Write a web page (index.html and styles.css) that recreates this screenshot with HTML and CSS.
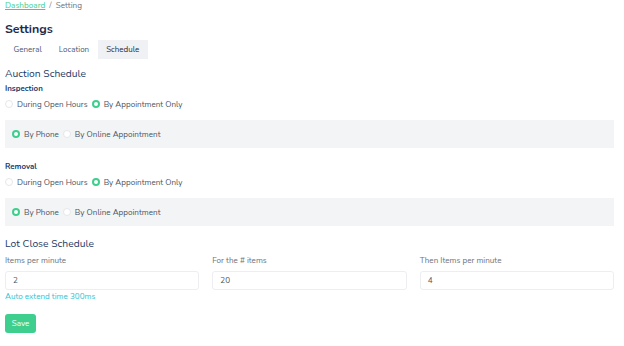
FILE: index.html
```html
<!DOCTYPE html>
<html>
<head>
<meta charset="utf-8">
<link rel="stylesheet" href="styles.css">
</head>
<body>
<div class="page">
  <div class="crumbs"><a class="crumb-link">Dashboard</a><span class="sep">/</span><span>Setting</span></div>
  <h1 class="title">Settings</h1>
  <div class="tabs">
    <span class="tab">General</span>
    <span class="tab">Location</span>
    <span class="tab active">Schedule</span>
  </div>
  <h2 class="section">Auction Schedule</h2>

  <div class="group-label">Inspection</div>
  <div class="radios">
    <label class="radio"><span class="dot"></span>During Open Hours</label>
    <label class="radio"><span class="dot on"></span>By Appointment Only</label>
  </div>
  <div class="subbox">
    <label class="radio"><span class="dot on"></span>By Phone</label>
    <label class="radio"><span class="dot"></span>By Online Appointment</label>
  </div>

  <div class="group-label g2">Removal</div>
  <div class="radios">
    <label class="radio"><span class="dot"></span>During Open Hours</label>
    <label class="radio"><span class="dot on"></span>By Appointment Only</label>
  </div>
  <div class="subbox">
    <label class="radio"><span class="dot on"></span>By Phone</label>
    <label class="radio"><span class="dot"></span>By Online Appointment</label>
  </div>

  <h2 class="section s2">Lot Close Schedule</h2>
  <div class="fields">
    <div class="field">
      <div class="flabel">Items per minute</div>
      <div class="input">2</div>
      <div class="hint">Auto extend time 300ms</div>
    </div>
    <div class="field">
      <div class="flabel">For the # items</div>
      <div class="input">20</div>
    </div>
    <div class="field">
      <div class="flabel">Then Items per minute</div>
      <div class="input">4</div>
    </div>
  </div>
  <button class="save">Save</button>
</div>
</body>
</html>
```
FILE: styles.css
```css
* { box-sizing: border-box; }
body {
  margin: 0;
  background: #fff;
  font-family: "Nunito", "Lato", "Open Sans", sans-serif;
  color: #4b5563;
}
.page {
  padding: 0 10px 0 5px;
  display: flex;
  flex-direction: column;
}
.crumbs {
  font-size: 8.2px;
  line-height: 12px;
  color: #6b7280;
  display: flex;
  gap: 4px;
}
.crumb-link {
  color: #3ecf8e;
  text-decoration: underline;
}
.title {
  margin: 8px 0 0;
  font-size: 12.4px;
  line-height: 18px;
  font-weight: 700;
  color: #1e2b4d;
}
.tabs {
  display: flex;
  margin-top: 2px;
  height: 19px;
}
.tab {
  font-size: 8px;
  line-height: 19px;
  padding: 0 8.5px;
  color: #4b5872;
}
.tab.active {
  background: #eff1f4;
  color: #1f2937;
}
.section {
  margin: 8px 0 0;
  font-size: 10.3px;
  line-height: 15px;
  font-weight: 400;
  color: #243a66;
}
.section.s2 { margin-top: 11px; }
.group-label {
  margin-top: 1px;
  font-size: 7.9px;
  line-height: 12px;
  font-weight: 700;
  color: #223a6b;
}
.group-label.g2 { margin-top: 13px; }
.radios {
  display: flex;
  margin-top: 3px;
  height: 12px;
  align-items: center;
}
.radio {
  display: flex;
  align-items: center;
  font-size: 8.1px;
  color: #4b5563;
  margin-right: 4px;
}
.dot {
  width: 8px;
  height: 8px;
  border-radius: 50%;
  border: 1px solid #e5e7eb;
  background: #fff;
  margin-right: 4px;
}
.dot.on {
  border: 2.5px solid #3ecf8e;
}
.subbox {
  margin-top: 10px;
  background: #f3f4f6;
  height: 28px;
  display: flex;
  align-items: center;
  padding-left: 7px;
}
.fields {
  margin-top: 3px;
  display: grid;
  grid-template-columns: 1fr 1fr 1fr;
  column-gap: 13px;
}
.flabel {
  font-size: 8.1px;
  line-height: 12px;
  color: #6b7280;
}
.input {
  margin-top: 4px;
  height: 19px;
  border: 1px solid #eceef1;
  border-radius: 3px;
  font-size: 8.1px;
  line-height: 17px;
  padding-left: 7px;
  color: #4b5563;
}
.hint {
  margin-top: 1px;
  font-size: 8.1px;
  line-height: 12px;
  color: #2cc4d4;
}
.save {
  align-self: flex-start;
  margin-top: 11px;
  width: 31px;
  height: 19px;
  border: none;
  border-radius: 3px;
  background: #3ecf8e;
  color: #fff;
  font-family: inherit;
  font-size: 8.1px;
  padding: 0;
}
```
